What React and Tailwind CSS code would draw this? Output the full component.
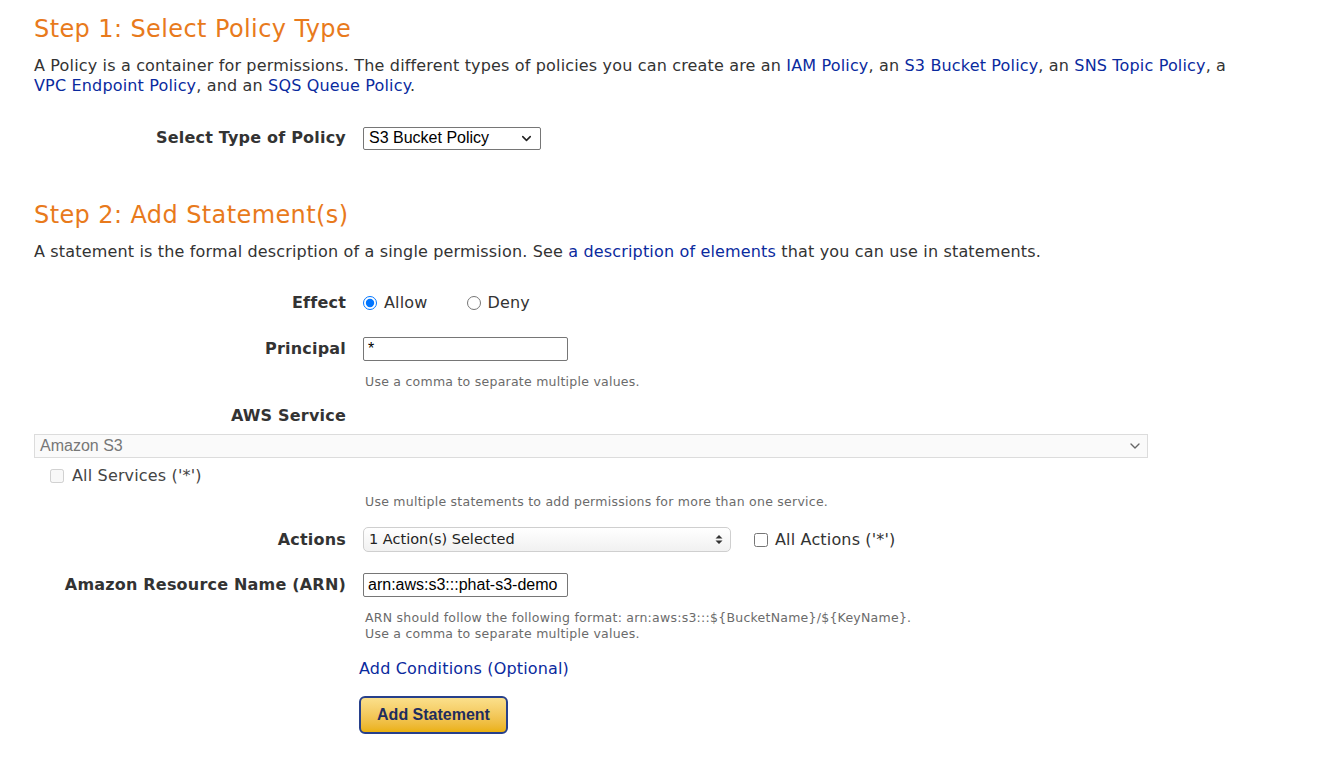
import React from "react";
import { ChevronDown } from "lucide-react";

const FONT = { fontFamily: "'DejaVu Sans', Verdana, sans-serif" };
const ARIAL = { fontFamily: "'Liberation Sans', Arial, sans-serif", letterSpacing: 0 };

const Label = ({ children, className = "" }) => (
  <div className={`w-[312px] shrink-0 text-right font-bold text-[16px] tracking-[0.2px] text-[#333] ${className}`}>{children}</div>
);

const A = ({ children }) => <a href="#" className="text-[#0a2a9e]">{children}</a>;

const Help = ({ children, className = "" }) => (
  <p className={`ml-[331px] text-[12.5px] tracking-[0.25px] leading-4 text-[#6b6b6b] ${className}`}>{children}</p>
);

export default function App() {
  return (
    <div className="min-h-screen bg-white px-[34px] pt-[13px] text-[#333] tracking-[0.16px]" style={FONT}>
      {/* STEP 1 */}
      <h1 className="text-[24px] leading-8 tracking-[0.4px] text-[#e87a1c]">Step 1: Select Policy Type</h1>
      <p className="mt-[11px] text-[16px] leading-5 max-w-[1212px]">
        A Policy is a container for permissions. The different types of policies you can create are an{" "}
        <A>IAM Policy</A>, an <A>S3 Bucket Policy</A>, an <A>SNS Topic Policy</A>, a <A>VPC Endpoint Policy</A>, and an{" "}
        <A>SQS Queue Policy</A>.
      </p>

      <div className="mt-[30px] flex items-center gap-[17px] h-6">
        <Label>Select Type of Policy</Label>
        <div
          className="w-[178px] h-[23px] border border-[#767676] rounded-[2px] flex items-center justify-between pl-[5px] pr-[6px] text-[16px] text-black"
          style={ARIAL}
        >
          <span>S3 Bucket Policy</span>
          <ChevronDown size={15} strokeWidth={2.5} className="text-[#222]" />
        </div>
      </div>

      {/* STEP 2 */}
      <h1 className="mt-[49px] text-[24px] leading-8 tracking-[0.4px] text-[#e87a1c]">Step 2: Add Statement(s)</h1>
      <p className="mt-[11px] text-[16px] leading-5">
        A statement is the formal description of a single permission. See <A>a description of elements</A> that you can
        use in statements.
      </p>

      <div className="mt-[29px] flex items-center gap-[17px] h-6">
        <Label>Effect</Label>
        <label className="flex items-center gap-[7px] text-[16px]">
          <input type="radio" name="effect" defaultChecked className="m-0 w-[14px] h-[14px]" />
          Allow
        </label>
        <label className="ml-[22px] flex items-center gap-[7px] text-[16px]">
          <input type="radio" name="effect" className="m-0 w-[14px] h-[14px]" />
          Deny
        </label>
      </div>

      <div className="mt-[22px] flex items-center gap-[17px] h-6">
        <Label>Principal</Label>
        <div className="w-[205px] h-6 border border-[#767676] rounded-[2px] pl-[4px] text-[16px] leading-[22px] text-black" style={ARIAL}>
          *
        </div>
      </div>
      <Help className="mt-[13px]">Use a comma to separate multiple values.</Help>

      <div className="mt-[16px] flex h-5 items-center">
        <Label className="leading-5">AWS Service</Label>
      </div>
      <div
        className="mt-[8px] w-[1114px] h-6 border border-[#dcdcdc] bg-[#fafafa] flex items-center justify-between pl-[5px] pr-[4px] text-[16px] text-[#777]"
        style={ARIAL}
      >
        <span>Amazon S3</span>
        <ChevronDown size={16} strokeWidth={2} className="text-[#666]" />
      </div>
      <label className="mt-[8px] ml-4 flex items-center gap-[8px] h-5 text-[16px] text-[#444]">
        <input type="checkbox" disabled className="m-0 w-[14px] h-[14px]" />
        All Services ('*')
      </label>
      <Help className="mt-[8px]">Use multiple statements to add permissions for more than one service.</Help>

      <div className="mt-[17px] flex items-center h-[25px]">
        <Label>Actions</Label>
        <div className="ml-[17px] w-[368px] h-[25px] border border-[#cfcfcf] rounded-[5px] bg-gradient-to-b from-white to-[#f1f1f1] flex items-center justify-between pl-[5px] pr-[7px] text-[14.5px] tracking-normal text-[#222]">
          <span>1 Action(s) Selected</span>
          <svg width="8" height="11" viewBox="0 0 8 11">
            <path d="M4 1L7.5 4.5H0.5Z M4 10L7.5 6.5H0.5Z" fill="#333" />
          </svg>
        </div>
        <label className="ml-[23px] flex items-center gap-[7px] text-[16px]">
          <input type="checkbox" className="m-0 w-[14px] h-[14px]" />
          All Actions ('*')
        </label>
      </div>

      <div className="mt-[21px] flex items-center gap-[17px] h-6">
        <Label>Amazon Resource Name (ARN)</Label>
        <div className="w-[205px] h-6 border border-[#767676] rounded-[2px] pl-[4px] text-[16px] leading-[22px] text-black" style={ARIAL}>
          arn:aws:s3:::phat-s3-demo
        </div>
      </div>
      <Help className="mt-[13px]">
        ARN should follow the following format: arn:aws:s3:::$&#123;BucketName&#125;/$&#123;KeyName&#125;.
        <br />
        Use a comma to separate multiple values.
      </Help>

      <div className="mt-[17px] ml-[325px] text-[16px] leading-5">
        <A>Add Conditions (Optional)</A>
      </div>

      <button
        className="mt-[17px] ml-[325px] w-[149px] h-[38px] rounded-[6px] border-2 border-[#27408b] bg-gradient-to-b from-[#fbe08b] to-[#ebb109] text-[16px] font-bold text-[#1f2d5e]"
        style={ARIAL}
      >
        Add Statement
      </button>
    </div>
  );
}
